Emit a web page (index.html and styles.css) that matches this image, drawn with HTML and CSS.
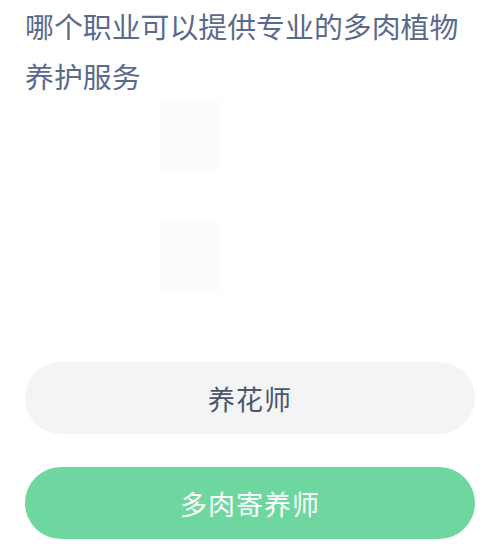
FILE: index.html
```html
<!DOCTYPE html>
<html lang="zh-CN">
<head>
  <meta charset="UTF-8">
  <meta name="viewport" content="width=device-width, initial-scale=1.0">
  <title>答题</title>
  <link rel="stylesheet" href="styles.css">
</head>
<body>
  <div class="quiz">
    <p class="question">哪个职业可以提供专业的多肉植物养护服务</p>
    <div class="figure">
      <div class="ghost"></div>
      <div class="ghost"></div>
    </div>
    <div class="options">
      <button class="option">养花师</button>
      <button class="option correct">多肉寄养师</button>
    </div>
  </div>
</body>
</html>
```
FILE: styles.css
```css
body { margin: 0; background: #fff; font-family: "Noto Sans CJK SC", "Noto Sans", sans-serif; }
.quiz { padding: 0 7px 0 25px; }
.question { margin: 0; font-size: 28.9px; line-height: 50px; color: #5a6a8d; }
.figure { height: 262px; display: flex; flex-direction: column; align-items: flex-start; gap: 52px; padding-left: 135px; }
.ghost { width: 60px; height: 70px; background: #fcfcfc; }
.options { display: flex; flex-direction: column; gap: 33px; }
.option { height: 72px; border: none; border-radius: 36px; background: #f3f4f6; color: #4b5669; font-family: inherit; font-size: 27px; letter-spacing: 1px; padding: 0; }
.option.correct { background: #6dd79f; color: #fff; }
```
